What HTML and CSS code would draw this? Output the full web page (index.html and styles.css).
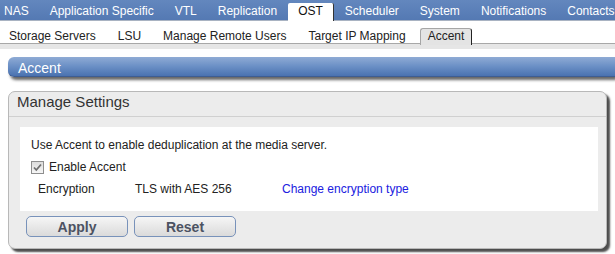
FILE: index.html
```html
<html>
    <head>
        <meta charset="utf-8">
        <title>Accent</title>
        <link rel="stylesheet" href="styles.css">
    </head>
    <body>
        <div class="topnav">
            <a class="tab">NAS</a>
            <a class="tab">Application Specific</a>
            <a class="tab">VTL</a>
            <a class="tab">Replication</a>
            <a class="tab rtab">OST</a>
            <a class="tab">Scheduler</a>
            <a class="tab">System</a>
            <a class="tab">Notifications</a>
            <a class="tab">Contacts</a>
        </div>
        <div class="subnav">
            <a class="subtab">Storage Servers</a>
            <a class="subtab">LSU</a>
            <a class="subtab">Manage Remote Users</a>
            <a class="subtab">Target IP Mapping</a>
            <a class="subtab rsubtab">Accent</a>
        </div>
        <div class="strip"></div>
        <div class="content">
            <div class="pagebar">Accent</div>
            <div class="panel">
                <div class="panel-title">Manage Settings</div>
                <div class="panel-body">
                    <div class="row">Use Accent to enable deduplication at the media server.</div>
                    <div class="row">
                        <span class="check"><svg width="11" height="11" viewBox="0 0 11 11"><path d="M2 5.5 L4.3 8 L9 2.5" fill="none" stroke="#6E6E6E" stroke-width="1.8"/></svg></span>Enable Accent
                    </div>
                    <div class="row setting">
                        <span class="label">Encryption</span>
                        <span class="value">TLS with AES 256</span>
                        <a class="link">Change encryption type</a>
                    </div>
                </div>
                <div class="buttons">
                    <button class="btn">Apply</button>
                    <button class="btn">Reset</button>
                </div>
            </div>
        </div>
    </body>
</html>
```
FILE: styles.css
```css
        html, body {
            margin: 0;
            overflow: hidden;
            background: #FFF;
            font-family: "Liberation Sans", Arial, sans-serif;
            font-size: 12px;
            color: #222;
            cursor: default;
        }
        .topnav {
            display: flex;
            gap: 1px;
            height: 20px;
            background: linear-gradient(#6387BE, #5479B3);
            border-bottom: 1px solid #A9B3C2;
            white-space: nowrap;
        }
        .tab {
            flex: none;
            padding: 0 10px;
            line-height: 22px;
            color: #FFF;
        }
        .tab:first-child {
            padding-left: 4px;
        }
        .rtab {
            align-self: flex-start;
            margin-top: 3px;
            line-height: 16px;
            padding-bottom: 2px;
            background: #FFF;
            color: #111;
            border-radius: 2px 2px 0 0;
            border-right: 1px solid #333;
        }
        .subnav {
            display: flex;
            align-items: flex-end;
            gap: 6px;
            height: 22px;
            padding-left: 1px;
            background: #FFF;
            border-bottom: 1px solid #A8A8A8;
            white-space: nowrap;
        }
        .subtab {
            flex: none;
            line-height: 14px;
            padding: 0 7px 2px;
            margin-bottom: -2px;
            border: 1px solid transparent;
            border-bottom: none;
            color: #222;
        }
        .rsubtab {
            background: #E4E4E4;
            border-color: #A6A6A6;
            border-right-color: #222;
            border-radius: 3px 3px 0 0;
        }
        .strip {
            height: 5px;
            background: #E6E6E6;
        }
        .content {
            padding: 8px 8px 0;
        }
        .pagebar {
            height: 19px;
            margin-right: -8px;
            padding-left: 10px;
            line-height: 22px;
            font-size: 14px;
            color: #FFF;
            background: linear-gradient(#8FABD5, #6A8FC5 50%, #4A72B0);
            border-bottom: 1px solid #3E5D92;
            border-radius: 6px 0 0 6px;
            box-shadow: 2px 3px 3px rgba(0,0,0,0.6);
        }
        .panel {
            margin-top: 14px;
            background: #ECECEC;
            border: 1px solid #B8B8B8;
            border-radius: 7px;
            box-shadow: 3px 3px 2px rgba(0,0,0,0.7);
        }
        .panel-title {
            padding: 0 0 5px 8px;
            line-height: 19px;
            font-size: 15px;
            color: #333;
            border-bottom: 1px solid #D0D0D0;
        }
        .panel-body {
            margin: 10px 8px 0 11px;
            padding: 7px 10px 11px 11px;
            background: #FFF;
        }
        .row {
            display: flex;
            align-items: center;
            height: 22px;
        }
        .check {
            display: inline-block;
            box-sizing: border-box;
            width: 13px;
            height: 13px;
            margin-right: 5px;
            border: 1px solid #8E8E8E;
            background: linear-gradient(#DCDCDC, #F6F6F6);
        }
        .check svg {
            display: block;
        }
        .label {
            width: 97px;
            margin-left: 7px;
        }
        .value {
            width: 147px;
        }
        .link {
            color: #2020E0;
        }
        .buttons {
            display: flex;
            gap: 6px;
            padding: 5px 0 11px 17px;
        }
        .btn {
            width: 102px;
            height: 21px;
            padding: 0;
            font-family: "Liberation Sans", Arial, sans-serif;
            font-size: 14px;
            font-weight: bold;
            color: #4C5262;
            background: linear-gradient(#F6F6F6, #DADADA);
            border: 1px solid #7892BA;
            border-radius: 5px;
            outline: none;
        }
```
